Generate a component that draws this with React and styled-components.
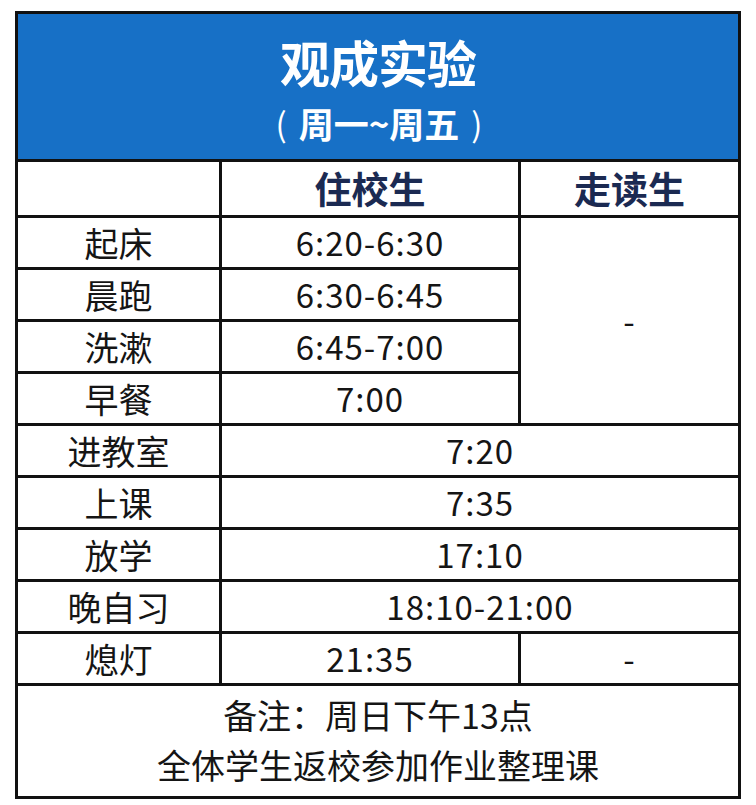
import React from 'react'
import styled, { createGlobalStyle } from 'styled-components'

const GlobalStyle = createGlobalStyle`
  body {
    margin: 0;
    background: #ffffff;
    font-family: "Noto Sans CJK SC", "Noto Sans", sans-serif;
  }
`

const Page = styled.div`
  padding: 11px 15px 0 15px;
  width: 756px;
  box-sizing: border-box;
`

const Table = styled.div`
  width: 726px;
  box-sizing: border-box;
  border: 3px solid #111;
  background: #111;
  display: grid;
  grid-template-columns: 201px 296px 217px;
  grid-template-rows: 145px 53px repeat(9, 49px) 110px;
  gap: 3px;
`

const Banner = styled.div`
  grid-column: 1 / 4;
  background: #1770c6;
  color: #fff;
  display: flex;
  flex-direction: column;
  align-items: center;
  justify-content: flex-start;
  padding-top: 17px;
  box-sizing: border-box;
  font-weight: 700;
`

const Title = styled.div`
  font-size: 50px;
  line-height: 60px;
  letter-spacing: -1px;
`

const Subtitle = styled.div`
  display: flex;
  align-items: center;
  gap: 12px;
  font-size: 35px;
  line-height: 40px;
  margin-top: 12px;
  padding-left: 2px;
`

const Paren = styled.span`
  font-size: 33px;
  font-weight: 400;
`

const Cell = styled.div`
  background: #fff;
  display: flex;
  align-items: center;
  justify-content: center;
  color: #151515;
  font-size: ${p => (p.label ? '34px' : '33px')};
  letter-spacing: ${p => (p.label ? '0' : '1px')};
  line-height: 1;
  grid-column: ${p => p.span || 'auto'};
  grid-row: ${p => p.rows || 'auto'};
`

const Head = styled(Cell)`
  color: #1b2a52;
  font-size: 37px;
  letter-spacing: 0;
  font-weight: 700;
`

const Note = styled.div`
  grid-column: 1 / 4;
  background: #fff;
  display: flex;
  flex-direction: column;
  align-items: center;
  justify-content: center;
  font-size: 34px;
  line-height: 50px;
  color: #151515;
  padding-bottom: 2px;
`

const rows = [
  { name: '起床', boarder: '6:20-6:30' },
  { name: '晨跑', boarder: '6:30-6:45' },
  { name: '洗漱', boarder: '6:45-7:00' },
  { name: '早餐', boarder: '7:00' },
  { name: '进教室', all: '7:20' },
  { name: '上课', all: '7:35' },
  { name: '放学', all: '17:10' },
  { name: '晚自习', all: '18:10-21:00' },
  { name: '熄灯', boarder: '21:35', day: '-' },
]

export default function App() {
  return (
    <Page>
      <GlobalStyle />
      <Table>
        <Banner>
          <Title>观成实验</Title>
          <Subtitle>
            <Paren>(</Paren>
            <span>周一~周五</span>
            <Paren>)</Paren>
          </Subtitle>
        </Banner>
        <Cell />
        <Head>住校生</Head>
        <Head>走读生</Head>
        {rows.map((r, i) => (
          <React.Fragment key={r.name}>
            <Cell label>{r.name}</Cell>
            {r.all ? (
              <Cell span="2 / 4">{r.all}</Cell>
            ) : (
              <Cell>{r.boarder}</Cell>
            )}
            {i === 0 && <Cell span="3" rows="3 / 7">-</Cell>}
            {r.day && <Cell>{r.day}</Cell>}
          </React.Fragment>
        ))}
        <Note>
          <div>备注：周日下午13点</div>
          <div>全体学生返校参加作业整理课</div>
        </Note>
      </Table>
    </Page>
  )
}
